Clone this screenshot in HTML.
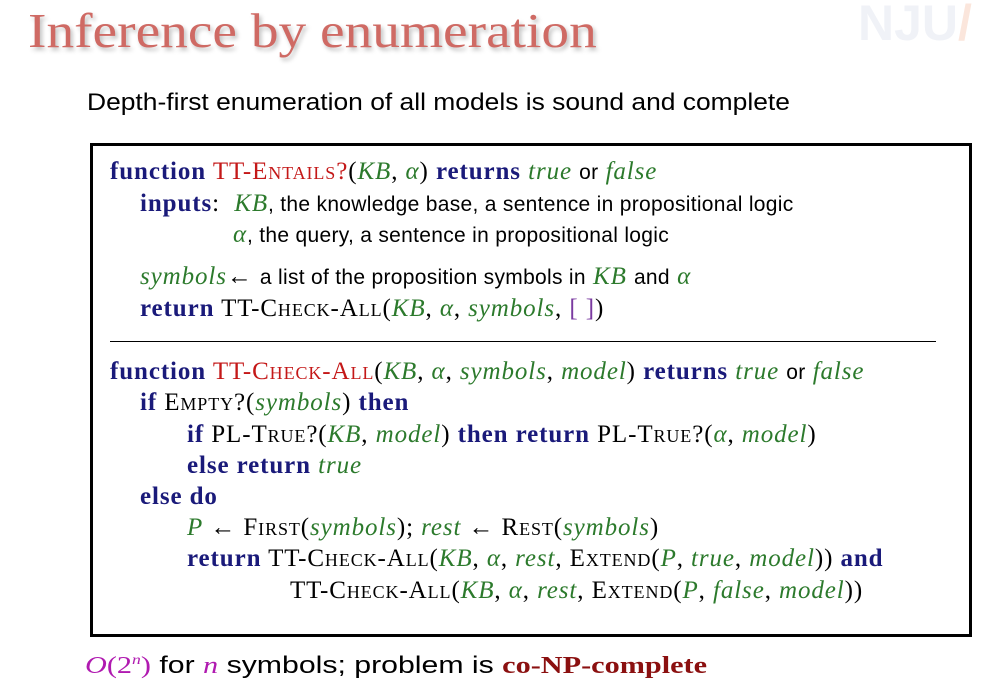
<!DOCTYPE html>
<html><head><meta charset="utf-8"><style>
body{margin:0;width:993px;height:681px;background:#fff;position:relative;overflow:hidden;font-family:"Liberation Serif",serif}
.t{position:absolute;white-space:nowrap}
.title{left:28px;top:2px;font-size:49px;color:#cf6a64;text-shadow:2px 3px 4px rgba(0,0,0,.25);transform:scaleX(1.13);transform-origin:left}
.logo{left:858px;top:-6px;font-family:"Liberation Sans",sans-serif;font-weight:bold;font-size:50px;color:#f0f2f7}
.sub{left:87px;top:89px;font-family:"Liberation Sans",sans-serif;font-size:24px;color:#000;transform:scaleX(1.1);transform-origin:left}
.box{position:absolute;left:90px;top:143px;width:876px;height:488px;border:3px solid #000}
.hr{position:absolute;left:110px;top:341px;width:826px;height:1px;background:#000}
.c{position:absolute;white-space:nowrap;font-size:25px;letter-spacing:0.9px;line-height:26px;color:#000}
.b{color:#1a1a7a;font-weight:bold}
.r{color:#c41818}
.g{color:#2c7a2c;font-style:italic}
.sc{font-variant:small-caps}
.s{font-family:"Liberation Sans",sans-serif;font-size:21px;letter-spacing:0.3px}
.bot{left:85px;top:652px;font-size:24px;font-family:"Liberation Sans",sans-serif;transform:scaleX(1.26);transform-origin:left}
.m{color:#b01ab0;font-family:"Liberation Serif",serif;font-style:italic}
</style></head><body>
<div class="t logo">NJU<span style="color:#fbe6dc">/</span></div>
<div class="t title">Inference by enumeration</div>
<div class="t sub">Depth-first enumeration of all models is sound and complete</div>
<div class="box"></div>
<div class="hr"></div>
<div class="c" style="left:110px;top:159px"><span class="b">function</span> <span class="r">TT-<span class="sc">Entails</span>?</span>(<span class="g">KB</span>, <span class="g">α</span>) <span class="b">returns</span> <span class="g">true</span> <span class="s">or</span> <span class="g">false</span></div>
<div class="c" style="left:140px;top:191px"><span class="b">inputs</span>: &nbsp;<span class="g">KB</span><span class="s">, the knowledge base, a sentence in propositional logic</span></div>
<div class="c" style="left:233px;top:222px"><span class="g">α</span><span class="s">, the query, a sentence in propositional logic</span></div>
<div class="c" style="left:140px;top:264px"><span class="g">symbols</span>← <span class="s">a list of the proposition symbols in</span> <span class="g">KB</span> <span class="s">and</span> <span class="g">α</span></div>
<div class="c" style="left:140px;top:296px"><span class="b">return</span> TT-<span class="sc">Check-All</span>(<span class="g">KB</span>, <span class="g">α</span>, <span class="g">symbols</span>, <span style="color:#7a3aa0">[ ]</span>)</div>
<div class="c" style="left:110px;top:359px"><span class="b">function</span> <span class="r">TT-<span class="sc">Check-All</span></span>(<span class="g">KB</span>, <span class="g">α</span>, <span class="g">symbols</span>, <span class="g">model</span>) <span class="b">returns</span> <span class="g">true</span> <span class="s">or</span> <span class="g">false</span></div>
<div class="c" style="left:140px;top:390px"><span class="b">if</span> <span class="sc">Empty</span>?(<span class="g">symbols</span>) <span class="b">then</span></div>
<div class="c" style="left:187px;top:422px"><span class="b">if</span> PL-<span class="sc">True</span>?(<span class="g">KB</span>, <span class="g">model</span>) <span class="b">then return</span> PL-<span class="sc">True</span>?(<span class="g">α</span>, <span class="g">model</span>)</div>
<div class="c" style="left:187px;top:453px"><span class="b">else return</span> <span class="g">true</span></div>
<div class="c" style="left:140px;top:484px"><span class="b">else do</span></div>
<div class="c" style="left:187px;top:515px"><span class="g">P</span> ← <span class="sc">First</span>(<span class="g">symbols</span>); <span class="g">rest</span> ← <span class="sc">Rest</span>(<span class="g">symbols</span>)</div>
<div class="c" style="left:187px;top:546px"><span class="b">return</span> TT-<span class="sc">Check-All</span>(<span class="g">KB</span>, <span class="g">α</span>, <span class="g">rest</span>, <span class="sc">Extend</span>(<span class="g">P</span>, <span class="g">true</span>, <span class="g">model</span>)) <span class="b">and</span></div>
<div class="c" style="left:290px;top:578px">TT-<span class="sc">Check-All</span>(<span class="g">KB</span>, <span class="g">α</span>, <span class="g">rest</span>, <span class="sc">Extend</span>(<span class="g">P</span>, <span class="g">false</span>, <span class="g">model</span>))</div>
<div class="t bot"><span class="m">O</span><span style="color:#b01ab0;font-family:'Liberation Serif',serif">(2<sup style="font-size:14px;font-style:italic">n</sup>)</span> for <span class="m">n</span> symbols; problem is <span style="color:#8b1010;font-family:'Liberation Serif',serif;font-weight:bold">co-NP-complete</span></div>
</body></html>
